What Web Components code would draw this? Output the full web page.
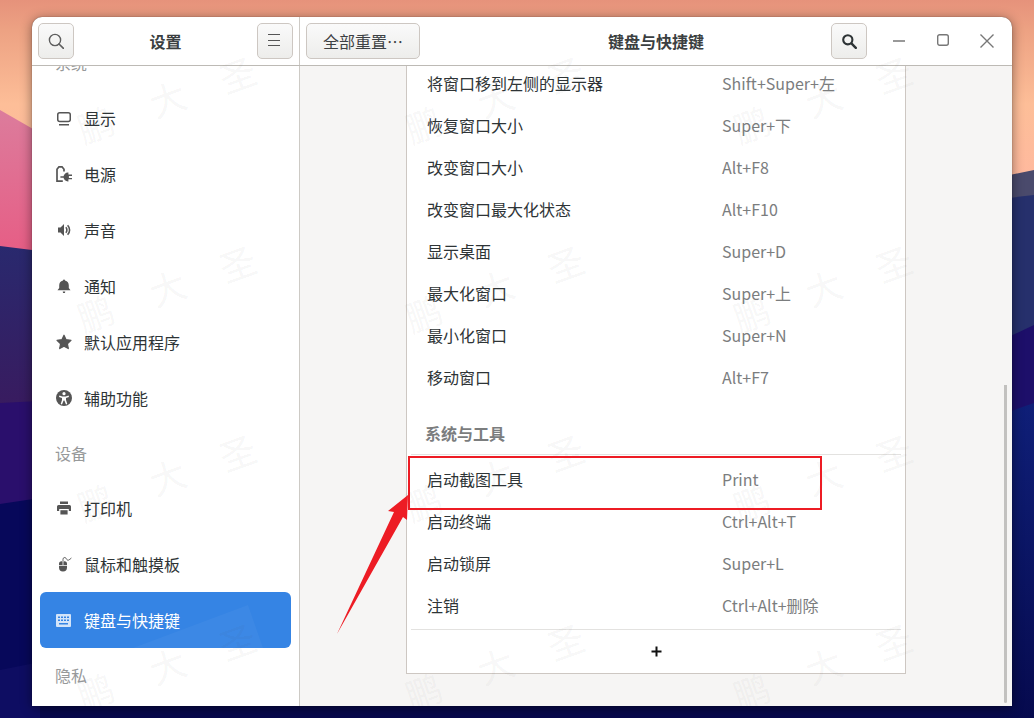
<!DOCTYPE html>
<html lang="zh">
<head>
<meta charset="utf-8">
<title>键盘与快捷键</title>
<style>
  body{margin:0;font-family:"Noto Sans CJK SC","Noto Sans",sans-serif;}
</style>
</head>
<body>
<gnome-desktop>
  <settings-window>
    <side-label slot="side" first>系统</side-label>
    <side-row slot="side" icon="display">显示</side-row>
    <side-row slot="side" icon="power">电源</side-row>
    <side-row slot="side" icon="sound">声音</side-row>
    <side-row slot="side" icon="bell">通知</side-row>
    <side-row slot="side" icon="star">默认应用程序</side-row>
    <side-row slot="side" icon="access">辅助功能</side-row>
    <side-label slot="side">设备</side-label>
    <side-row slot="side" icon="printer">打印机</side-row>
    <side-row slot="side" icon="mouse">鼠标和触摸板</side-row>
    <side-row slot="side" icon="keyboard" selected>键盘与快捷键</side-row>
    <side-label slot="side">隐私</side-label>

    <shortcut-list>
      <shortcut-row keys="Shift+Super+左">将窗口移到左侧的显示器</shortcut-row>
      <shortcut-row keys="Super+下">恢复窗口大小</shortcut-row>
      <shortcut-row keys="Alt+F8">改变窗口大小</shortcut-row>
      <shortcut-row keys="Alt+F10">改变窗口最大化状态</shortcut-row>
      <shortcut-row keys="Super+D">显示桌面</shortcut-row>
      <shortcut-row keys="Super+上">最大化窗口</shortcut-row>
      <shortcut-row keys="Super+N">最小化窗口</shortcut-row>
      <shortcut-row keys="Alt+F7">移动窗口</shortcut-row>
      <shortcut-head>系统与工具</shortcut-head>
      <shortcut-row keys="Print">启动截图工具</shortcut-row>
      <shortcut-row keys="Ctrl+Alt+T">启动终端</shortcut-row>
      <shortcut-row keys="Super+L">启动锁屏</shortcut-row>
      <shortcut-row keys="Ctrl+Alt+删除">注销</shortcut-row>
      <shortcut-add></shortcut-add>
    </shortcut-list>
  </settings-window>
  <red-annotation></red-annotation>
</gnome-desktop>

<script>
const ICONS = {
  search: '<circle cx="7" cy="7" r="5.6" fill="none" stroke="currentColor" stroke-width="1.4"/><path d="M11 11l5 5" fill="none" stroke="currentColor" stroke-width="1.6" stroke-linecap="round"/>',
  searchBold: '<circle cx="6.8" cy="6.8" r="4.6" fill="none" stroke="currentColor" stroke-width="2.1"/><path d="M10.4 10.4l4.4 4.4" fill="none" stroke="currentColor" stroke-width="2.4" stroke-linecap="round"/>',
  menu: '<path d="M1 1.500h12M1 7.500h12M1 12.500h12" fill="none" stroke="currentColor" stroke-width="1.2"/>',
  display: '<rect x="1.75" y="2.75" width="12.5" height="8.7" rx="2" fill="none" stroke="currentColor" stroke-width="1.5"/><rect x="3" y="14" width="10" height="1.5" fill="currentColor"/>',
  power: '<path d="M6.8 15.2H1V3.2L3 .8H6L8 3.2V5.4" fill="none" stroke="currentColor" stroke-width="1.7"/><path d="M7.5 11a4.4 4.4 0 0 1 4.9-4.4V8.6H16V9.9H12.9V12H16V13.3H12.4v2.1A4.4 4.4 0 0 1 7.5 11z" fill="currentColor"/><path d="M4.4 11H8" stroke="currentColor" stroke-width="1.4"/>',
  sound: '<path d="M2 5.500h2.500L8 2v12L4.500 10.500H2z" fill="currentColor"/><path d="M9.800 5.300a3.800 3.800 0 0 1 0 5.400M11.600 3.200a6.800 6.800 0 0 1 0 9.600" fill="none" stroke="currentColor" stroke-width="1.600"/>',
  bell: '<path d="M8 1.500a1 1 0 0 1 1 1c2.600.5 3.800 2.500 3.800 4.900V10l1.700 2.200h-13L3.200 10V7.400C3.200 5 4.400 3 7 2.500a1 1 0 0 1 1-1z" fill="currentColor"/><path d="M6.800 13.400h2.400v.5a1.200 1.200 0 0 1-2.400 0z" fill="currentColor"/>',
  star: '<path d="M8 1.200l2.100 4.500 4.900.6-3.600 3.400.9 4.900L8 12.200l-4.300 2.400.9-4.900L1 6.300l4.900-.6z" fill="currentColor" stroke="currentColor" stroke-width="1.2" stroke-linejoin="round"/>',
  access: '<circle cx="8" cy="8" r="8" fill="currentColor"/><circle cx="8" cy="3.700" r="1.600" fill="#fff"/><path d="M3.400 5.600L6.300 6.600H9.700L12.600 5.600 13 6.900 10 8V10L11.300 14 10 14.400 8.400 10.600H7.600L6 14.400 4.700 14 6 10V8L3 6.900Z" fill="#fff"/>',
  printer: '<path d="M4 1.500h8V4H4z" fill="currentColor"/><path d="M2.500 5h11A1.500 1.500 0 0 1 15 6.500V11h-2.200V9H3.200v2H1V6.500A1.500 1.500 0 0 1 2.500 5z" fill="currentColor"/><rect x="4.400" y="10.200" width="7.200" height="4.300" fill="currentColor"/>',
  mouse: '<path d="M6.600 5.200H5.500A2.500 2.500 0 0 0 3 7.700V9h3.600zM7.400 5.200h1.100A2.500 2.500 0 0 1 11 7.700V9H7.400zM3 9.800h8v1.700a4 4 0 0 1-8 0z" fill="currentColor"/><path d="M7 5V3.200C7 1.400 9 1 10 2.200s1.200 2.500 2.400 2c1-.4 2-1.300 3-2.200" fill="none" stroke="currentColor" stroke-width=".9"/>',
  keyboard: '<rect x="0" y="2" width="15" height="13" rx="1" fill="currentColor"/><path d="M2 4.500h2v1.600H2zM5 4.500h2v1.600H5zM8 4.500h2v1.600H8zM11 4.500h2v1.600h-2zM2 7.500h2v1.600H2zM5 7.500h2v1.600H5zM8 7.500h2v1.600H8zM11 7.500h2v1.600h-2zM3 11h9v1.500H3z" fill="#3584e4"/>'
};

function svgIcon(name, size = 16) {
  return `<svg width="${size}" height="${size}" viewBox="0 0 16 16" aria-hidden="true">${ICONS[name]}</svg>`;
}

class GnomeDesktop extends HTMLElement {
  constructor() {
    super();
    this.attachShadow({ mode: "open" });
  }

  connectedCallback() {
    this.shadowRoot.innerHTML = `
      <style>
        :host{
          display:block;
          position:relative;
          width:1034px;
          height:718px;
          box-sizing:border-box;
          padding:17px 22px 12px 32px;
          overflow:hidden;
          background:#07084c;
        }
        .wall{position:absolute;left:0;top:0;}
        ::slotted(settings-window){position:relative;}
      </style>
      <svg class="wall" width="1034" height="718" viewBox="0 0 1034 718">
        <defs>
          <linearGradient id="sky" x1="0" y1="0" x2="0" y2="1">
            <stop offset="0" stop-color="#e6927b"/>
            <stop offset=".16" stop-color="#eda283"/>
            <stop offset=".55" stop-color="#fdbe98"/>
            <stop offset="1" stop-color="#ffb89f"/>
          </linearGradient>
          <linearGradient id="pink" x1="0" y1="0" x2="0" y2="1">
            <stop offset="0" stop-color="#dc7c9c"/>
            <stop offset="1" stop-color="#e75c84"/>
          </linearGradient>
          <linearGradient id="blueL" x1="0" y1="0" x2="0" y2="1">
            <stop offset="0" stop-color="#29296e"/>
            <stop offset="1" stop-color="#3a1a5e"/>
          </linearGradient>
          <linearGradient id="navyR" x1="0" y1="0" x2="0" y2="1">
            <stop offset="0" stop-color="#0f1f78"/>
            <stop offset="1" stop-color="#060a4e"/>
          </linearGradient>
        </defs>
        <rect width="1034" height="190" fill="url(#sky)"/>
        <path d="M0 110L40 133V260H0Z" fill="url(#pink)"/>
        <path d="M0 246L40 251V420H0Z" fill="url(#blueL)"/>
        <path d="M0 403L40 401V520H0Z" fill="#2a0f6c"/>
        <path d="M0 504L40 498V680H0Z" fill="#07085a"/>
        <path d="M0 670L40 662V718H0Z" fill="#0e0d62"/>
        <path d="M1000 177L1034 170V210H1000Z" fill="#4a4a6c"/>
        <path d="M1000 199L1034 195V340H1000Z" fill="#26306c"/>
        <path d="M1000 341L1034 325V420H1000Z" fill="#1d0f6a"/>
        <path d="M1000 415L1034 403V718H1000Z" fill="url(#navyR)"/>
      </svg>
      <slot></slot>
    `;
  }
}

class SettingsWindow extends HTMLElement {
  constructor() {
    super();
    this.attachShadow({ mode: "open" });
  }

  connectedCallback() {
    this.shadowRoot.innerHTML = `
      <style>
        :host{
          display:flex;
          flex-direction:column;
          width:980px;
          height:689px;
          background:#fff;
          color:#2e3436;
          font-size:16px;
          border-radius:10px 10px 0 0;
          overflow:hidden;
          box-shadow:0 2px 12px rgba(0,0,0,.45),0 0 1px rgba(0,0,0,.6);
        }
        header{
          display:flex;
          flex:none;
          height:48px;
          border-bottom:1px solid #bdbab5;
        }
        .left{
          display:flex;
          flex:none;
          align-items:center;
          justify-content:space-between;
          width:255px;
          padding:0 6px;
          border-right:1px solid #cdcac5;
        }
        .right{
          flex:1;
          display:grid;
          grid-template-columns:1fr auto 1fr;
          align-items:center;
          padding:0 6px;
        }
        .title{font-weight:700;color:#3b3f41;line-height:20px;}
        .end{display:flex;align-items:center;justify-content:flex-end;margin-right:-3px;}
        .controls{display:flex;margin-left:10px;color:#777;}
        .controls span{display:flex;width:44px;justify-content:center;}
        .body{flex:1;display:flex;min-height:0;}
        .side{
          flex:none;
          width:267px;
          border-right:1px solid #cdcac5;
          overflow:hidden;
          background:#fff;
        }
        .side .inner{
          display:flex;
          flex-direction:column;
          margin-top:-30px;
          padding:0 8px;
        }
        main{
          flex:1;
          background:#f6f5f4;
          overflow:hidden;
          position:relative;
          display:flex;
          justify-content:center;
          align-items:flex-start;
        }
        .thumb{
          position:absolute;
          right:5px;
          top:319px;
          width:3px;
          height:318px;
          background:#c2c1bf;
          border-radius:0 0 2px 2px;
        }
      </style>
      <header>
        <div class="left">
          <tool-button icon="search" tint="#5e5e5e"></tool-button>
          <span class="title">设置</span>
          <tool-button icon="menu" tint="#555"></tool-button>
        </div>
        <div class="right">
          <div><tool-button wide>全部重置…</tool-button></div>
          <span class="title">键盘与快捷键</span>
          <div class="end">
            <tool-button icon="searchBold" tint="#2e3436"></tool-button>
            <div class="controls">
              <span><svg width="14" height="14" viewBox="0 0 14 14"><path d="M1 8h12" stroke="currentColor" stroke-width="1.5"/></svg></span>
              <span><svg width="14" height="14" viewBox="0 0 14 14"><rect x="1.7" y="1.7" width="10.6" height="10.6" rx="2" fill="none" stroke="currentColor" stroke-width="1.4"/></svg></span>
              <span><svg width="16" height="16" viewBox="0 0 16 16"><path d="M1.500 1.500l13 13M14.500 1.500l-13 13" stroke="currentColor" stroke-width="1.4"/></svg></span>
            </div>
          </div>
        </div>
      </header>
      <div class="body">
        <div class="side"><div class="inner"><slot name="side"></slot></div></div>
        <main>
          <slot></slot>
          <div class="thumb"></div>
        </main>
      </div>
      <water-mark></water-mark>
    `;
  }
}

class ToolButton extends HTMLElement {
  constructor() {
    super();
    this.attachShadow({ mode: "open" });
  }

  connectedCallback() {
    const icon = this.getAttribute("icon");
    this.shadowRoot.innerHTML = `
      <style>
        :host{
          display:inline-flex;
          align-items:center;
          justify-content:center;
          box-sizing:border-box;
          width:36px;
          height:36px;
          border:1px solid #cdc7c2;
          border-radius:5px;
          background:linear-gradient(#fafafa,#ededeb);
          color:#3d4144;
          font-size:16px;
        }
        :host([wide]){width:114px;vertical-align:top;}
      </style>
      ${icon ? svgIcon(icon, 16) : "<slot></slot>"}
    `;
    if (icon) this.style.color = this.getAttribute("tint");
  }
}

class SideLabel extends HTMLElement {
  constructor() {
    super();
    this.attachShadow({ mode: "open" });
  }

  connectedCallback() {
    this.shadowRoot.innerHTML = `
      <style>
        :host{
          display:flex;
          align-items:center;
          height:54px;
          padding-left:15px;
          color:#97999a;
          font-size:16px;
        }
      </style>
      <slot></slot>
    `;
  }
}

class SideRow extends HTMLElement {
  constructor() {
    super();
    this.attachShadow({ mode: "open" });
  }

  connectedCallback() {
    this.shadowRoot.innerHTML = `
      <style>
        :host{
          display:flex;
          align-items:center;
          position:relative;
          height:56px;
          padding-left:16px;
          border-radius:6px;
          color:#2e3436;
          font-size:16px;
        }
        :host([selected]){background:#3584e4;color:#fff;}
        :host([selected])::after{
          content:"";
          position:absolute;
          inset:0;
          background:rgba(255,255,255,.04);
          clip-path:polygon(93px 56px,208px 13px,223px 56px);
        }
        .icon{display:flex;width:16px;height:16px;margin-right:12px;color:#555;}
        :host([selected]) .icon{color:#d3e4f9;}
      </style>
      <span class="icon">${svgIcon(this.getAttribute("icon"))}</span>
      <slot></slot>
    `;
  }
}

class ShortcutList extends HTMLElement {
  constructor() {
    super();
    this.attachShadow({ mode: "open" });
  }

  connectedCallback() {
    this.shadowRoot.innerHTML = `
      <style>
        :host{
          display:block;
          box-sizing:border-box;
          width:500px;
          margin-top:-4px;
          background:#fff;
          border:1px solid #cdc7c2;
          border-top:none;
        }
      </style>
      <slot></slot>
    `;
  }
}

class ShortcutRow extends HTMLElement {
  constructor() {
    super();
    this.attachShadow({ mode: "open" });
  }

  connectedCallback() {
    this.shadowRoot.innerHTML = `
      <style>
        :host{
          display:flex;
          align-items:center;
          height:42px;
          padding-left:20px;
          font-size:16px;
          color:#2e3436;
        }
        .name{width:295px;}
        .keys{color:#7b7d7e;}
      </style>
      <span class="name"><slot></slot></span>
      <span class="keys">${this.getAttribute("keys")}</span>
    `;
  }
}

class ShortcutHead extends HTMLElement {
  constructor() {
    super();
    this.attachShadow({ mode: "open" });
  }

  connectedCallback() {
    this.shadowRoot.innerHTML = `
      <style>
        :host{
          display:block;
          position:relative;
          height:60px;
          box-sizing:border-box;
          padding:24px 0 0 18px;
          line-height:22px;
          font-size:16px;
          font-weight:700;
          color:#7b7d7e;
        }
        :host::after{
          content:"";
          position:absolute;
          left:4px;
          right:4px;
          top:56px;
          height:1px;
          background:#e3e2e0;
        }
      </style>
      <slot></slot>
    `;
  }
}

class ShortcutAdd extends HTMLElement {
  constructor() {
    super();
    this.attachShadow({ mode: "open" });
  }

  connectedCallback() {
    this.shadowRoot.innerHTML = `
      <style>
        :host{
          display:flex;
          align-items:center;
          justify-content:center;
          height:44px;
          margin:3px 4px 0;
          border-top:1px solid #e3e2e0;
          box-sizing:border-box;
        }
      </style>
      <svg width="11" height="11" viewBox="0 0 11 11"><path d="M5.500 .5v10M.5 5.500h10" stroke="#111" stroke-width="2"/></svg>
    `;
  }
}

class WaterMark extends HTMLElement {
  constructor() {
    super();
    this.attachShadow({ mode: "open" });
  }

  connectedCallback() {
    // repeating stamp, positions are window relative
    const marks = [];
    for (let col = 0; col < 3; col++) {
      for (let row = 0; row < 4; row++) {
        const dx = col * 328, dy = row * 189;
        marks.push(["鹏", 63 + dx, 106 + dy]);
        marks.push(["大", 135 + dx, 80 + dy]);
        marks.push(["圣", 205 + dx, 56 + dy]);
      }
    }
    this.shadowRoot.innerHTML = `
      <style>
        :host{
          position:absolute;
          inset:0;
          overflow:hidden;
          pointer-events:none;
        }
        span{
          position:absolute;
          width:40px;
          height:40px;
          margin:-20px 0 0 -20px;
          line-height:40px;
          text-align:center;
          font-size:36px;
          color:rgba(60,60,60,.05);
          transform:rotate(-20deg);
        }
      </style>
      ${marks.map(([t, x, y]) => `<span style="left:${x}px;top:${y}px">${t}</span>`).join("")}
    `;
  }
}

class RedAnnotation extends HTMLElement {
  constructor() {
    super();
    this.attachShadow({ mode: "open" });
  }

  connectedCallback() {
    this.shadowRoot.innerHTML = `
      <style>
        :host{position:absolute;left:0;top:0;pointer-events:none;}
        svg{display:block;}
      </style>
      <svg width="1034" height="718" viewBox="0 0 1034 718">
        <rect x="409" y="457" width="412" height="52" fill="none" stroke="#ed1c24" stroke-width="2"/>
        <path d="M337 634L394 512 388 511 408 495 407 520 403 517Z" fill="#ed1c24"/>
      </svg>
    `;
  }
}

customElements.define("gnome-desktop", GnomeDesktop);
customElements.define("settings-window", SettingsWindow);
customElements.define("tool-button", ToolButton);
customElements.define("side-label", SideLabel);
customElements.define("side-row", SideRow);
customElements.define("shortcut-list", ShortcutList);
customElements.define("shortcut-row", ShortcutRow);
customElements.define("shortcut-head", ShortcutHead);
customElements.define("shortcut-add", ShortcutAdd);
customElements.define("water-mark", WaterMark);
customElements.define("red-annotation", RedAnnotation);
</script>
</body>
</html>
